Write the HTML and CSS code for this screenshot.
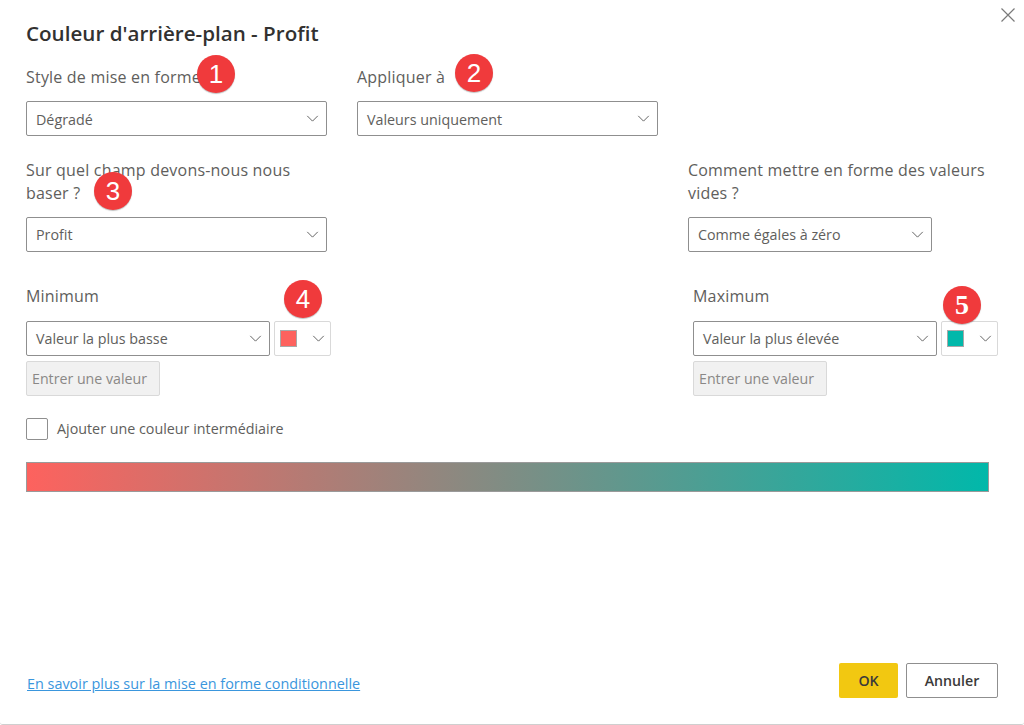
FILE: index.html
```html
<!DOCTYPE html>
<html lang="fr">
<head>
<meta charset="utf-8">
<title>Couleur d'arrière-plan - Profit</title>
<link rel="stylesheet" href="styles.css">
</head>
<body>
<main class="dialog">
  <button class="close" aria-label="Fermer"><svg width="16" height="16" viewBox="0 0 16 16"><path d="M1.5 1.5l13 13M14.5 1.5l-13 13" stroke="#7a7a7a" stroke-width="1.2" fill="none"/></svg></button>
  <h1 class="title">Couleur d'arrière-plan - Profit</h1>

  <section class="row row-top">
    <div class="field">
      <div class="label">Style de mise en forme</div>
      <div class="select wide"><span>Dégradé</span><svg class="chev" viewBox="0 0 14 8"><path d="M1 1l6 6 6-6"/></svg></div>
      <span class="badge b1">1</span>
    </div>
    <div class="field">
      <div class="label">Appliquer à</div>
      <div class="select wide"><span>Valeurs uniquement</span><svg class="chev" viewBox="0 0 14 8"><path d="M1 1l6 6 6-6"/></svg></div>
      <span class="badge b2">2</span>
    </div>
  </section>

  <section class="row row-second">
    <div class="field">
      <div class="label two">Sur quel champ devons-nous nous baser ?</div>
      <div class="select wide"><span>Profit</span><svg class="chev" viewBox="0 0 14 8"><path d="M1 1l6 6 6-6"/></svg></div>
      <span class="badge b3">3</span>
    </div>
    <div class="field">
      <div class="label two">Comment mettre en forme des valeurs vides ?</div>
      <div class="select mid"><span>Comme égales à zéro</span><svg class="chev" viewBox="0 0 14 8"><path d="M1 1l6 6 6-6"/></svg></div>
    </div>
  </section>

  <section class="row row-range">
    <div class="field">
      <div class="label">Minimum</div>
      <div class="pick">
        <div class="select mid"><span>Valeur la plus basse</span><svg class="chev" viewBox="0 0 14 8"><path d="M1 1l6 6 6-6"/></svg></div>
        <div class="swatch-btn"><i class="swatch red"></i><svg class="chev" viewBox="0 0 14 8"><path d="M1 1l6 6 6-6"/></svg></div>
      </div>
      <div class="value">Entrer une valeur</div>
      <span class="badge b4">4</span>
    </div>
    <div class="field">
      <div class="label">Maximum</div>
      <div class="pick">
        <div class="select mid"><span>Valeur la plus élevée</span><svg class="chev" viewBox="0 0 14 8"><path d="M1 1l6 6 6-6"/></svg></div>
        <div class="swatch-btn"><i class="swatch teal"></i><svg class="chev" viewBox="0 0 14 8"><path d="M1 1l6 6 6-6"/></svg></div>
      </div>
      <div class="value">Entrer une valeur</div>
      <span class="badge b5">5</span>
    </div>
  </section>

  <label class="check"><i class="box"></i><span>Ajouter une couleur intermédiaire</span></label>
  <div class="gradient"></div>

  <footer class="foot">
    <a class="link" href="#">En savoir plus sur la mise en forme conditionnelle</a>
    <div class="actions">
      <button class="btn ok">OK</button>
      <button class="btn cancel">Annuler</button>
    </div>
  </footer>
</main>
</body>
</html>
```

FILE: styles.css
```css
* { box-sizing: border-box; }
html, body { margin: 0; height: 100%; background: #fff; }
body { font-family: "Open Sans", "Noto Sans", sans-serif; color: #605e5c; }

.dialog {
  position: relative;
  width: 1024px;
  height: 725px;
  padding: 0 26px;
  display: flex;
  flex-direction: column;
  border-bottom: 1px solid #cfcfcf;
  border-bottom-left-radius: 3px;
  border-bottom-right-radius: 3px;
}

.close {
  position: absolute;
  top: 7px;
  right: 8px;
  width: 16px;
  height: 16px;
  padding: 0;
  border: 0;
  background: none;
  display: block;
}
.close svg { display: block; }

.title {
  margin: 19px 0 0;
  height: 28px;
  font-size: 20.6px;
  line-height: 28px;
  font-weight: 600;
  color: #323130;
}

.row { display: flex; }
.field { position: relative; }
.row-top { margin-top: 19px; gap: 30px; }
.row-top .field { width: 301px; }
.row-top .select { padding-top: 2px; }
.row-top .chev { margin-top: -2px; }
.row-second { margin-top: 23px; gap: 361px; }
.row-second .field { width: 301px; }
.row-range { margin-top: 33px; }
.row-range .field:first-child { width: 667px; }

.label {
  font-size: 16px;
  line-height: 23px;
  height: 23px;
  margin-bottom: 12px;
  letter-spacing: 0.2px;
}
.label.two { height: 46px; margin-bottom: 12px; }
.row-range .label { margin-bottom: 13px; }

.select {
  height: 35px;
  border: 1px solid #8f8f8f;
  border-radius: 2px;
  padding: 0 7px 0 9px;
  display: flex;
  align-items: center;
  justify-content: space-between;
  font-size: 14.3px;
  background: #fff;
}
.wide { width: 301px; }
.mid { width: 244px; }

.chev {
  width: 13px;
  height: 7px;
  fill: none;
  stroke: #606060;
  stroke-width: 1.1;
  flex: none;
}

.pick { display: flex; gap: 4px; }
.swatch-btn {
  width: 57px;
  height: 35px;
  border: 1px solid #d9d9d9;
  border-radius: 2px;
  padding: 0 5px;
  display: flex;
  align-items: center;
  justify-content: space-between;
}
.swatch { display: block; width: 17px; height: 17px; border: 1px solid #a8a8a8; }
.swatch.red { background: #fd625e; }
.swatch.teal { background: #01b8aa; }

.value {
  width: 134px;
  height: 35px;
  margin-top: 5px;
  border: 1px solid #d9d9d9;
  border-radius: 2px;
  background: #f1f1f1;
  padding-left: 5px;
  display: flex;
  align-items: center;
  font-size: 14.2px;
  color: #8a8886;
}

.check {
  margin-top: 21px;
  display: flex;
  align-items: center;
  gap: 9px;
  font-size: 14.3px;
  line-height: 24px;
}
.box {
  width: 22px;
  height: 22px;
  border: 1px solid #8f8f8f;
  border-radius: 2px;
  display: block;
}

.gradient {
  width: 963px;
  height: 30px;
  margin-top: 21px;
  border: 1px solid #9a9a9a;
  background: linear-gradient(90deg, #fd625e, #01b8aa);
}

.foot {
  margin-top: auto;
  margin-bottom: 26px;
  display: flex;
  align-items: center;
  justify-content: space-between;
}
.link {
  margin-left: 1px;
  padding-top: 5px;
  font-size: 14.4px;
  color: #3a96dd;
  text-decoration: underline;
}
.actions { display: flex; gap: 8px; }
.btn {
  height: 35px;
  border-radius: 2px;
  font: 600 14.2px "Open Sans", "Noto Sans", sans-serif;
  color: #3b3a39;
  padding: 0;
}
.ok { width: 59px; background: #f2c811; border: 0; }
.cancel { width: 92px; background: #fff; border: 1px solid #8f8f8f; }

.badge {
  position: absolute;
  width: 38px;
  height: 38px;
  border-radius: 50%;
  background: #f03a3c;
  color: #fff;
  font: 400 26px/38px "Liberation Sans", sans-serif;
  text-align: center;
  box-shadow: 0 1px 1px rgba(0,0,0,.25);
}
.b1 { left: 171px; top: -11px; }
.b2 { left: 98px; top: -12px; }
.b3 { left: 68px; top: 13px; }
.b4 { left: 258px; top: -5px; }
.b5 { left: 250px; top: 1px; font-family: "Liberation Serif", serif; font-weight: 700; font-size: 28px; }
```
